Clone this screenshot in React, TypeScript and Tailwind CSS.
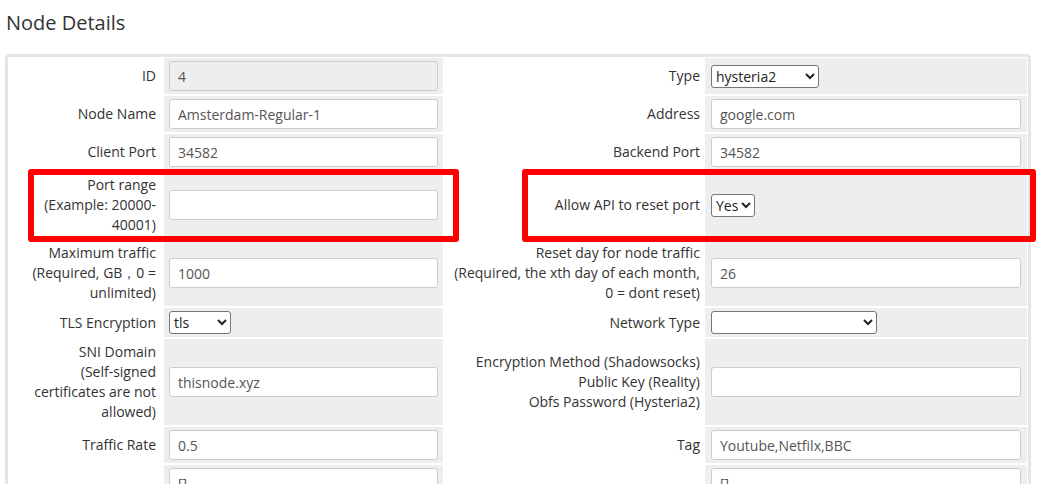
import React from "react";

type Field =
  | { kind: "input"; value: string; disabled?: boolean }
  | { kind: "select"; value: string; options: string[]; w: string };

type Row = {
  l1: React.ReactNode;
  f1: Field;
  l2: React.ReactNode;
  f2: Field;
};

const rows: Row[] = [
  {
    l1: "ID",
    f1: { kind: "input", value: "4", disabled: true },
    l2: "Type",
    f2: { kind: "select", value: "hysteria2", options: ["hysteria2", "shadowsocks", "vmess", "vless", "trojan"], w: "w-[108px]" },
  },
  {
    l1: "Node Name",
    f1: { kind: "input", value: "Amsterdam-Regular-1" },
    l2: "Address",
    f2: { kind: "input", value: "google.com" },
  },
  {
    l1: "Client Port",
    f1: { kind: "input", value: "34582" },
    l2: "Backend Port",
    f2: { kind: "input", value: "34582" },
  },
  {
    l1: (
      <>
        Port range
        <br />
        (Example: 20000-
        <br />
        40001)
      </>
    ),
    f1: { kind: "input", value: "" },
    l2: "Allow API to reset port",
    f2: { kind: "select", value: "Yes", options: ["Yes", "No"], w: "w-[44px]" },
  },
  {
    l1: (
      <>
        Maximum traffic
        <br />
        (Required, GB，0 =
        <br />
        unlimited)
      </>
    ),
    f1: { kind: "input", value: "1000" },
    l2: (
      <>
        Reset day for node traffic
        <br />
        (Required, the xth day of each month,
        <br />0 = dont reset)
      </>
    ),
    f2: { kind: "input", value: "26" },
  },
  {
    l1: "TLS Encryption",
    f1: { kind: "select", value: "tls", options: ["tls", "none"], w: "w-[62px]" },
    l2: "Network Type",
    f2: { kind: "select", value: "", options: ["", "tcp", "ws", "grpc"], w: "w-[166px]" },
  },
  {
    l1: (
      <>
        SNI Domain
        <br />
        (Self-signed
        <br />
        certificates are not
        <br />
        allowed)
      </>
    ),
    f1: { kind: "input", value: "thisnode.xyz" },
    l2: (
      <>
        Encryption Method (Shadowsocks)
        <br />
        Public Key (Reality)
        <br />
        Obfs Password (Hysteria2)
      </>
    ),
    f2: { kind: "input", value: "" },
  },
  {
    l1: "Traffic Rate",
    f1: { kind: "input", value: "0.5" },
    l2: "Tag",
    f2: { kind: "input", value: "Youtube,Netfilx,BBC" },
  },
  {
    l1: "",
    f1: { kind: "input", value: "[]" },
    l2: "",
    f2: { kind: "input", value: "[]" },
  },
];

function FieldView({ f }: { f: Field }) {
  if (f.kind === "input") {
    return (
      <input
        type="text"
        defaultValue={f.value}
        disabled={f.disabled}
        className={
          "h-[30px] w-full rounded-[3px] border border-[#cccccc] px-[8px] text-[14px] text-[#555555] outline-none " +
          (f.disabled ? "bg-[#eeeeee]" : "bg-white")
        }
      />
    );
  }
  return (
    <select
      defaultValue={f.value}
      className={
        "h-[23px] rounded-[3px] border border-[#767676] bg-white text-[14px] text-[#222222] " + f.w
      }
    >
      {f.options.map((o) => (
        <option key={o} value={o}>
          {o}
        </option>
      ))}
    </select>
  );
}

export default function App() {
  return (
    <div
      className="relative w-[1040px] bg-white text-[#333333]"
      style={{ fontFamily: '"Open Sans", "Noto Sans", sans-serif' }}
    >
      <h1 className="pl-[6px] pt-[9px] text-[20px] leading-[28px] font-normal text-[#333333]">
        Node Details
      </h1>
      <div className="ml-[5px] mt-[17px] w-[1026px] rounded-[4px] border-[3px] border-[#e3e6e9] bg-white p-[1px]">
        <div className="grid grid-cols-[153px_279px_258px_322px] gap-[2px] text-[14px] leading-[20px]">
          {rows.map((r, i) => (
            <React.Fragment key={i}>
              <div className="flex items-center justify-end whitespace-nowrap py-[3px] pl-[3px] pr-[6px] text-right">
                <span>{r.l1}</span>
              </div>
              <div className="flex items-center bg-[#eeeeee] px-[5px] py-[3px]">
                <FieldView f={r.f1} />
              </div>
              <div className="flex items-center justify-end whitespace-nowrap py-[3px] pl-[3px] pr-[3px] text-right">
                <span>{r.l2}</span>
              </div>
              <div className="flex items-center bg-[#eeeeee] px-[6px] py-[3px]">
                <FieldView f={r.f2} />
              </div>
            </React.Fragment>
          ))}
        </div>
      </div>
      <div className="pointer-events-none absolute left-[28px] top-[169px] h-[73px] w-[431px] rounded-[3px] border-[6px] border-[#ff0000]" />
      <div className="pointer-events-none absolute left-[522px] top-[169px] h-[73px] w-[514px] rounded-[3px] border-[6px] border-[#ff0000]" />
    </div>
  );
}
